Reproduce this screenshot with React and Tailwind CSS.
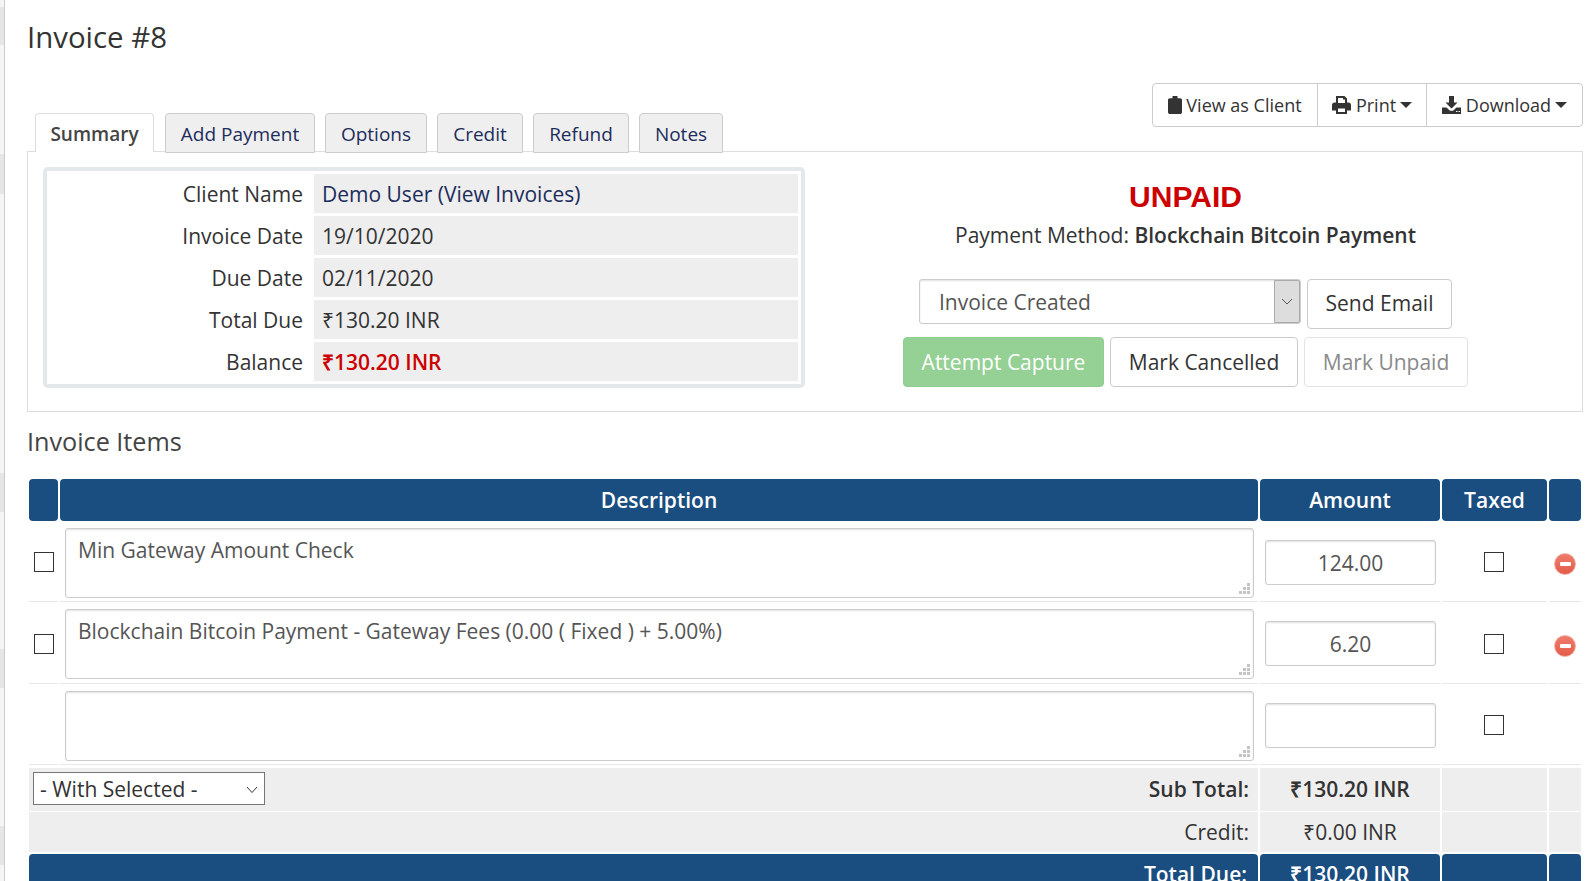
import React from "react";

function Caret() {
  return <span className="inline-block w-0 h-0 ml-[4px] align-middle border-x-[6px] border-x-transparent border-t-[6px] border-t-[#333]" />;
}

function ClipIcon() {
  return (
    <svg width="14" height="18" viewBox="0 0 14 18" className="inline-block align-[-2px] mr-[4px]">
      <path d="M4.5 0h5v2.2h2.6c1 0 1.9.8 1.9 1.8v12.2c0 1-.9 1.8-1.9 1.8H1.9C.9 18 0 17.2 0 16.2V4c0-1 .9-1.8 1.9-1.8h2.6z" fill="#333" />
    </svg>
  );
}
function PrintIcon() {
  return (
    <svg width="19" height="18" viewBox="0 0 19 18" className="inline-block align-[-2px] mr-[5px]">
      <path fillRule="evenodd" d="M4 0h8.500L15 2.500V6.500h1.500c1.400 0 2.500 1.100 2.500 2.500v5.500h-4V18H4v-3.500H0V9c0-1.400 1.100-2.500 2.500-2.500H4zM6 2v5h7V3.500h-2V2zM6 12.500V16h7v-3.500z" fill="#333" />
    </svg>
  );
}
function DownloadIcon() {
  return (
    <svg width="19" height="18" viewBox="0 0 19 18" className="inline-block align-[-2px] mr-[5px]">
      <path d="M7 0h5v6.500h3.500L9.500 12.500 3.500 6.500H7z" fill="#333" />
      <path fillRule="evenodd" d="M0 11.500h4.500l3.500 3.300h3l3.500-3.300H19V18H0zM14 15h1.500v1H14zM16.500 15H18v1h-1.500z" fill="#333" />
    </svg>
  );
}

function Grip() {
  return (
    <svg width="12" height="12" viewBox="0 0 12 12" className="absolute right-[2px] bottom-[2px]">
      <g fill="#c4c4c4">
        <rect x="8" y="0" width="3" height="3" />
        <rect x="4" y="4" width="3" height="3" />
        <rect x="8" y="4" width="3" height="3" />
        <rect x="0" y="8" width="3" height="3" />
        <rect x="4" y="8" width="3" height="3" />
        <rect x="8" y="8" width="3" height="3" />
      </g>
    </svg>
  );
}

function Remove() {
  return (
    <span className="inline-flex items-center justify-center w-[22px] h-[22px] rounded-full bg-linear-to-b from-[#ee7c6c] to-[#e55a48] border border-[#f0b0a8] align-top">
      <span className="block w-[11px] h-[4px] rounded-[1px] bg-white" />
    </span>
  );
}

function Box() {
  return <span className="inline-block w-[20px] h-[20px] border border-[#333] bg-white align-top" />;
}

function Tab({ children, active, w }) {
  return active ? (
    <div className={"h-[39px] pt-[2px] flex items-center justify-center border border-[#ddd] border-b-0 bg-white rounded-t-[4px] text-[#444] font-semibold relative z-10 " + w}>{children}</div>
  ) : (
    <div className={"h-[40px] pt-[2px] flex items-center justify-center border border-[#ccc] bg-[#efefef] rounded-t-[4px] text-[#1c2c5b] " + w}>{children}</div>
  );
}

function InfoRow({ label, children, last }) {
  return (
    <div className={"flex gap-[11px] h-[39px] " + (last ? "" : "mb-[3px]")}>
      <div className="w-[256px] text-right pt-[1px] leading-[39px] text-[#333]">{label}</div>
      <div className="flex-1 bg-[#eee] px-[8px] pt-[1px] leading-[39px] text-[#333]">{children}</div>
    </div>
  );
}

function Btn({ className, children }) {
  return <div className={"h-[50px] flex items-center justify-center rounded-[4px] border " + className}>{children}</div>;
}

function Th({ children }) {
  return (
    <th className="bg-[#1a4d80] text-white font-semibold text-center h-[42px] p-0 pt-[2px] rounded-[4px]">{children}</th>
  );
}

function ItemRow({ desc, amount, check, remove, h, boxTop, removeTop }) {
  const cell = "border-b border-[#e8e8e8] p-0 align-top";
  return (
    <tr>
      <td className={cell + " text-center " + boxTop} style={{ height: h }}>{check ? <Box /> : null}</td>
      <td className={cell + " pl-[5px] pr-[4px] pt-[7px]"}>
        <div className="relative h-[70px] w-full border border-[#ccc] rounded-[3px] bg-white shadow-[inset_0_1px_2px_rgba(0,0,0,0.12)] px-[12px] py-[7px] text-[#555] leading-[28px] text-left">
          {desc}
          <Grip />
        </div>
      </td>
      <td className={cell + " pl-[5px] pr-[4px] pt-[19px]"}>
        <div className="h-[45px] pt-[2px] border border-[#ccc] rounded-[3px] bg-white shadow-[inset_0_1px_2px_rgba(0,0,0,0.12)] flex items-center justify-center text-[#555]">{amount}</div>
      </td>
      <td className={cell + " text-center pr-[2px] " + boxTop}><Box /></td>
      <td className={cell + " text-center leading-none " + removeTop}>{remove ? <Remove /> : null}</td>
    </tr>
  );
}

export default function App() {
  return (
    <div className="relative w-[1593px] h-[881px] overflow-hidden bg-white text-[21px] text-[#333] font-['Open_Sans',sans-serif]">
      <div className="flex h-full">
        <div className="w-[5px] shrink-0 border-r border-[#ccc] flex flex-col bg-[#f5f5f5]">
          <div className="h-[7px]" />
          <div className="h-[38px] bg-[#e6e6e6]" />
          <div className="h-[109px]" />
          <div className="h-[40px] bg-[#e6e6e6]" />
          <div className="h-[279px]" />
          <div className="h-[39px] bg-[#e6e6e6]" />
          <div className="h-[137px]" />
          <div className="h-[39px] bg-[#e6e6e6]" />
          <div className="h-[138px]" />
          <div className="h-[39px] bg-[#e6e6e6]" />
        </div>
        <div className="flex-1 min-w-0 pl-[22px] pr-[10px]">
          <h1 className="text-[29.4px] leading-[38px] pt-[18px] text-[#333] font-normal h-[83px] m-0">Invoice #8</h1>

          <div className="relative h-[68px]">
            <div className="flex gap-[10px] pl-[8px] items-start absolute left-0 top-[30px] text-[19px]">
              <Tab active w="w-[119px] mr-[1px]">Summary</Tab>
              <Tab w="w-[150px]">Add Payment</Tab>
              <Tab w="w-[102px]">Options</Tab>
              <Tab w="w-[86px]">Credit</Tab>
              <Tab w="w-[96px]">Refund</Tab>
              <Tab w="w-[84px]">Notes</Tab>
            </div>
            <div className="absolute right-0 top-0 flex h-[44px] border border-[#ccc] rounded-[4px] text-[18px] items-center">
              <div className="w-[165px] h-full flex items-center justify-center border-r border-[#ccc]"><ClipIcon />View as Client</div>
              <div className="w-[109px] h-full flex items-center justify-center border-r border-[#ccc]"><PrintIcon />Print<Caret /></div>
              <div className="w-[155px] h-full flex items-center justify-center"><DownloadIcon />Download<Caret /></div>
            </div>
          </div>

          <div className="h-[261px] border border-[#ddd] flex pt-[15px] pl-[15px]">
            <div className="w-[762px] h-[221px] shrink-0 border-4 border-[#e3e8ea] rounded-[5px] bg-white pt-[3px] pr-[3px]">
              <InfoRow label="Client Name"><span className="text-[#1c2c5b]">Demo User (View Invoices)</span></InfoRow>
              <InfoRow label="Invoice Date">19/10/2020</InfoRow>
              <InfoRow label="Due Date">02/11/2020</InfoRow>
              <InfoRow label="Total Due">₹130.20 INR</InfoRow>
              <InfoRow label="Balance" last><span className="text-[#cc0000] font-semibold">₹130.20 INR</span></InfoRow>
            </div>
            <div className="flex-1 flex flex-col items-center pr-[16px]">
              <div className="h-[40px] mt-[12px] text-[30px] leading-[36px] font-bold text-[#cc0000] font-['Liberation_Sans',sans-serif]">UNPAID</div>
              <div className="leading-[32px]">Payment Method: <span className="font-semibold">Blockchain Bitcoin Payment</span></div>
              <div className="flex gap-[6px] mt-[28px] h-[49px] items-start">
                <div className="w-[382px] h-[45px] border border-[#ccc] rounded-[3px] flex items-stretch shadow-[inset_0_1px_2px_rgba(0,0,0,0.12)]">
                  <div className="flex-1 pl-[19px] pt-[2px] flex items-center text-[#555]">Invoice Created</div>
                  <div className="w-[26px] bg-[#ddd] border border-[#aaa] rounded-r-[2px] flex items-center justify-center">
                    <svg width="12" height="7" viewBox="0 0 12 7"><path d="M1 1l5 5 5-5" fill="none" stroke="#555" strokeWidth="1" /></svg>
                  </div>
                </div>
                <Btn className="w-[145px] border-[#ccc] text-[#333]">Send Email</Btn>
              </div>
              <div className="flex gap-[6px] mt-[9px]">
                <Btn className="w-[201px] pt-[2px] bg-[#95d095] border-[#8fcf8f] text-white">Attempt Capture</Btn>
                <Btn className="w-[188px] pt-[2px] border-[#ccc] text-[#333]">Mark Cancelled</Btn>
                <Btn className="w-[164px] pt-[2px] border-[#e3e3e3] text-[#8a8a8a]">Mark Unpaid</Btn>
              </div>
            </div>
          </div>

          <h2 className="text-[25.2px] leading-[32px] mt-[13px] h-[54px] font-normal text-[#444]">Invoice Items</h2>

          <table className="table-fixed border-separate border-spacing-x-[2px] border-spacing-y-0 w-[1556px] text-center">
            <colgroup>
              <col className="w-[29px]" />
              <col className="w-[1198px]" />
              <col className="w-[180px]" />
              <col className="w-[105px]" />
              <col className="w-[32px]" />
            </colgroup>
            <thead>
              <tr>
                <Th />
                <Th>Description</Th>
                <Th>Amount</Th>
                <Th>Taxed</Th>
                <Th />
              </tr>
            </thead>
            <tbody>
              <ItemRow h={81} boxTop="pt-[31px]" removeTop="pt-[32px]" desc="Min Gateway Amount Check" amount="124.00" check remove />
              <ItemRow h={82} boxTop="pt-[32px]" removeTop="pt-[33px]" desc="Blockchain Bitcoin Payment - Gateway Fees (0.00 ( Fixed ) + 5.00%)" amount="6.20" check remove />
              <ItemRow h={81} boxTop="pt-[31px]" removeTop="pt-[32px]" desc="" amount="" />
              <tr><td colSpan={5} className="h-[3px] p-0" /></tr>
              <tr>
                <td colSpan={2} className="bg-[#eee] border-b border-white h-[44px] p-0 pl-[4px] pr-[9px] text-right font-semibold">
                  <div className="flex items-center justify-between">
                    <div className="w-[232px] h-[33px] mb-[2px] pt-[2px] border border-[#767676] bg-white flex items-center justify-between pl-[6px] pr-[6px] font-normal">
                      - With Selected -
                      <svg width="12" height="8" viewBox="0 0 12 8"><path d="M1 1l5 5.500L11 1" fill="none" stroke="#333" strokeWidth="1" /></svg>
                    </div>
                    <span>Sub Total:</span>
                  </div>
                </td>
                <td className="bg-[#eee] border-b border-white p-0 font-semibold">₹130.20 INR</td>
                <td className="bg-[#eee] border-b border-white p-0" />
                <td className="bg-[#eee] border-b border-white p-0" />
              </tr>
              <tr>
                <td colSpan={2} className="bg-[#eee] h-[40px] p-0 pt-[2px] pr-[9px] text-right">Credit:</td>
                <td className="bg-[#eee] p-0 pt-[2px]">₹0.00 INR</td>
                <td className="bg-[#eee] p-0" />
                <td className="bg-[#eee] p-0" />
              </tr>
              <tr><td colSpan={5} className="h-[2px] p-0" /></tr>
              <tr>
                <td colSpan={2} className="bg-[#1a4d80] rounded-[4px] text-white h-[42px] p-0 pr-[11px] text-right font-semibold">Total Due:</td>
                <td className="bg-[#1a4d80] rounded-[4px] text-white p-0 font-semibold">₹130.20 INR</td>
                <td className="bg-[#1a4d80] rounded-[4px] p-0" />
                <td className="bg-[#1a4d80] rounded-[4px] p-0" />
              </tr>
            </tbody>
          </table>
        </div>
      </div>
    </div>
  );
}
